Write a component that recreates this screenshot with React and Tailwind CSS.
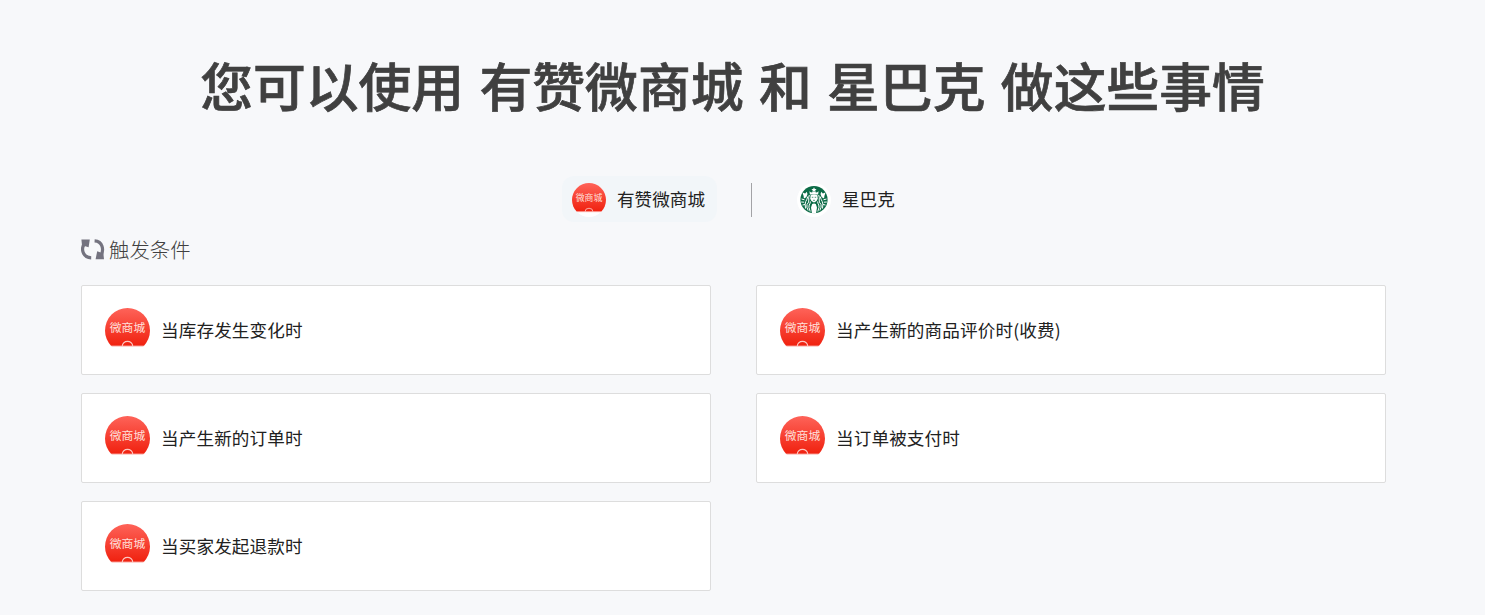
import React from 'react';

const triggers = [
  { id: 1, label: '当库存发生变化时' },
  { id: 2, label: '当产生新的商品评价时(收费)' },
  { id: 3, label: '当产生新的订单时' },
  { id: 4, label: '当订单被支付时' },
  { id: 5, label: '当买家发起退款时' },
];

function MallLogo({ size }) {
  return (
    <svg width={size} height={size} viewBox="0 0 45 45" className="shrink-0">
      <defs>
        <linearGradient id="mallRed" x1="0" y1="0" x2="0" y2="1">
          <stop offset="0" stopColor="#fe6359" />
          <stop offset="1" stopColor="#f0210f" />
        </linearGradient>
        <clipPath id="mallClip">
          <circle cx="22.5" cy="22.5" r="22.5" />
        </clipPath>
      </defs>
      <g clipPath="url(#mallClip)">
        <rect width="45" height="45" fill="#fff" />
        <rect width="45" height="38" fill="url(#mallRed)" />
        <rect y="37.6" width="45" height="1" fill="#fbb5b0" />
        <path d="M17.3 38a5.2 4.6 0 0 1 10.4 0" fill="none" stroke="#fdc6c1" strokeWidth="1.1" />
        <text x="22.5" y="23.6" textAnchor="middle" fontSize="11.8" fontWeight="400" fill="#ffe0dc" fontFamily="'Noto Sans CJK SC', sans-serif">
          微商城
        </text>
      </g>
    </svg>
  );
}

function CoffeeLogo() {
  return (
    <svg width="34" height="34" viewBox="0 0 34 34" className="shrink-0">
      <circle cx="17" cy="17" r="17" fill="#fff" />
      <circle cx="17" cy="16.7" r="13.6" fill="#0b6b46" />
      {/* Crown and star */}
      <path d="M17 4.3l.8 1.6 1.8.2-1.3 1.2.3 1.8-1.6-.8-1.6.8.3-1.8-1.3-1.2 1.8-.2zM12.4 8.2l1.7 1.4 2.9-.8 2.9.8 1.7-1.4-.5 3.2h-8.2z" fill="#fff" />
      {/* Face and body */}
      <path d="M13.6 12.2q3.4-1.6 6.8 0l.3 3q-.5 3.2-3.7 4.2-3.2-1-3.7-4.2z" fill="#fff" />
      <path d="M14.8 14.3h1.5M17.7 14.3h1.5M16 17.3h2" stroke="#0b6b46" strokeWidth=".7" />
      <path d="M15.2 21q1.8-1 3.6 0l1.200 3.500-1 6h-4l-1-6z" fill="#fff" />
      {/* Hair and tails */}
      <g fill="none" stroke="#fff" strokeWidth="1">
        <path d="M12.3 12q-1 3-.5 5t-1.8 4.5q-.8 2.5 1.2 6M10.8 13.5q-.8 3-2 5t-.3 7M13.4 18.5q-.2 2-1.2 3.5t1 6.5" />
        <path d="M21.7 12q1 3 .5 5t1.8 4.5q.8 2.5-1.2 6M23.2 13.5q.8 3 2 5t.3 7M20.6 18.5q.2 2 1.2 3.5t-1 6.5" />
        <path d="M4.5 16l3 .8M4.2 19l3 .2M5.5 22l2.5-.5M29.5 16l-3 .8M29.8 19l-3 .2M28.5 22l-2.5-.5" />
      </g>
      <path d="M5.5 9.5l2.7 1 1.5-1.7.8 2.3-1.2 3.2-2.4 1.3-.3-2.6zM28.5 9.5l-2.7 1-1.5-1.7-.8 2.3 1.2 3.2 2.4 1.3.3-2.6z" fill="#fff" />
    </svg>
  );
}

function CycleIcon() {
  return (
    <svg width="24" height="21" viewBox="0 0 24 21" className="shrink-0">
      <g fill="none" stroke="#74737f" strokeWidth="3.2">
        <path d="M4 4.5C-.6 9 1.500 18.500 10.200 18.800" />
        <path d="M13.600 1.900C21.800 2.300 23 11 20 16.500" />
      </g>
      <path d="M.4 .4H8.800L7.600 8.200 1 6.200zM23 20.200H14.600L16.200 12.200 22.400 14.600z" fill="#74737f" />
    </svg>
  );
}

function TriggerCard({ label }) {
  return (
    <div className="h-[90px] flex items-center gap-[11px] pl-[23px] bg-white border border-[#dddddd] rounded-xs">
      <MallLogo size={45} />
      <span className="text-[17.6px] leading-6 tracking-[0.12px] text-[#212121]">{label}</span>
    </div>
  );
}

export default function App() {
  return (
    <main className="h-[615px] overflow-hidden bg-[#f7f8fa] pl-[81px] pr-[99px] font-['Noto_Sans_CJK_SC',sans-serif]">
      <h1 className="pt-[45px] pr-0.5 text-center text-[52.8px] leading-[79px] font-medium text-[#404040] [word-spacing:3.5px] [-webkit-text-stroke:0.7px_#404040] whitespace-nowrap">
        您可以使用 有赞微商城 和 星巴克 做这些事情
      </h1>

      {/* App switcher */}
      <div className="mt-[52px] ml-[481px] flex items-center h-[46px] text-[17.6px] text-[#212121]">
        <button className="w-[155px] h-[46px] flex items-center gap-[11px] pl-2.5 pt-px rounded-xl bg-[#f2f6f9]">
          <MallLogo size={34} />
          <span>有赞微商城</span>
        </button>
        <div className="w-px h-[34px] mt-0.5 ml-[34px] bg-[#a3a3a6]" />
        <button className="h-[46px] flex items-center gap-[11px] ml-[45px] pt-px">
          <CoffeeLogo />
          <span>星巴克</span>
        </button>
      </div>

      {/* Trigger list */}
      <h2 className="mt-3 h-[30px] flex items-center gap-1 text-[20.4px] leading-[30px] font-light text-[#404040]">
        <CycleIcon />
        <span>触发条件</span>
      </h2>
      <div className="mt-[21px] grid grid-cols-2 gap-x-[45px] gap-y-[18px]">
        {triggers.map(t => (
          <TriggerCard key={t.id} label={t.label} />
        ))}
      </div>
    </main>
  );
}
